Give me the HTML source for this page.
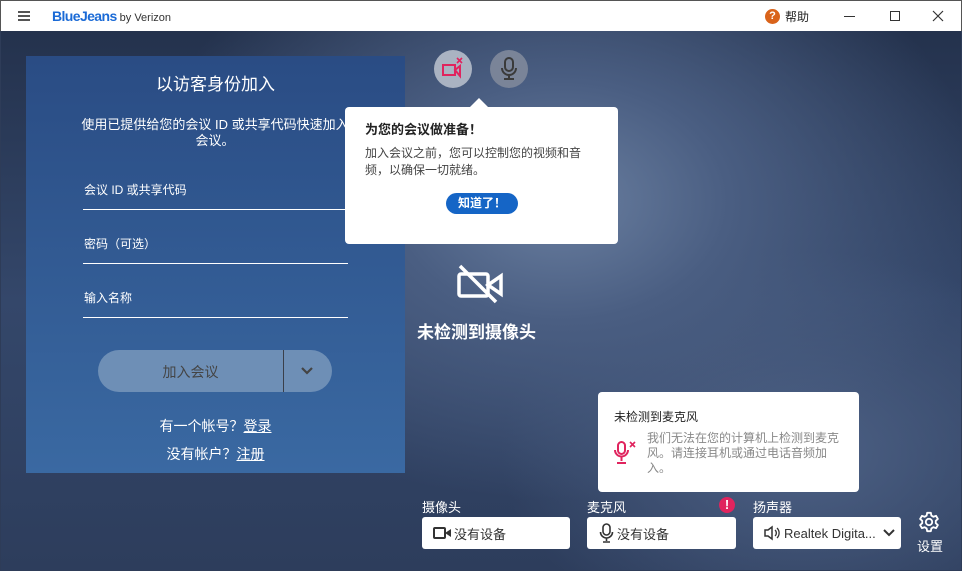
<!DOCTYPE html>
<html><head><meta charset="utf-8"><style>
*{margin:0;padding:0;box-sizing:border-box}
body{width:962px;height:571px;overflow:hidden;font-family:"Liberation Sans","Noto Sans CJK SC",sans-serif;position:relative;background:#2e3c58}
.bg{position:absolute;left:1px;top:31px;width:960px;height:539px;background:radial-gradient(ellipse 420px 300px at 560px 170px,#6a7fa0 0%,#4a5e82 40%,rgba(46,60,88,0) 100%),radial-gradient(ellipse 300px 200px at 800px 420px,#4d6185,rgba(46,60,88,0)),linear-gradient(180deg,#24324d 0%,#34476a 50%,#2d3d5c 100%)}
.tb{position:absolute;left:0;top:0;width:962px;height:31px;background:#fff;border:1px solid #555;border-bottom:none}
.abs{position:absolute}
.panel{position:absolute;left:26px;top:56px;width:379px;height:417px;background:linear-gradient(180deg,#2a4c84,#3a69a2)}
.w{color:#fff}
.field{position:absolute;left:83px;width:265px;border-bottom:1px solid #fff;color:#fff;font-size:13px;height:1px}
.card{position:absolute;background:#fff;border-radius:4px}
.dev{position:absolute;top:517px;height:32px;background:#fff;border-radius:3px;font-size:13px;color:#333;display:flex;align-items:center}
.lbl{position:absolute;top:497px;color:#fff;font-size:13px}
</style></head><body>
<div class="bg"></div>
<div class="tb">
 <div class="abs" style="left:17px;top:10px;width:12px;height:2px;background:#555;box-shadow:0 4px 0 #555,0 8px 0 #555"></div>
 <div class="abs" style="left:51px;top:7px;white-space:nowrap"><span style="font-size:14px;color:#1a6ad6;font-weight:bold;letter-spacing:-0.6px">BlueJeans</span><span style="font-size:11px;color:#333;margin-left:3px">by Verizon</span></div>
 <div class="abs" style="left:764px;top:8px;width:15px;height:15px;border-radius:50%;background:#d9631a;color:#fff;font-size:11px;font-weight:bold;text-align:center;line-height:15px">?</div>
 <div class="abs" style="left:784px;top:7px;font-size:12px;color:#222">帮助</div>
 <div class="abs" style="left:843px;top:15px;width:11px;height:1px;background:#333"></div>
 <div class="abs" style="left:889px;top:10px;width:10px;height:10px;border:1px solid #333"></div>
 <svg class="abs" style="left:931px;top:9px" width="12" height="12"><path d="M1 1l10 10M11 1L1 11" stroke="#333" stroke-width="1.2"/></svg>
</div>
<div class="panel"></div>
<div class="abs w" style="left:26px;width:379px;top:70px;text-align:center;font-size:17px">以访客身份加入</div>
<div class="abs w" style="left:78px;width:274px;top:117px;text-align:center;font-size:13px;line-height:16px">使用已提供给您的会议 ID 或共享代码快速加入会议。</div>
<div class="abs w" style="left:84px;top:181px;font-size:12px">会议 ID 或共享代码</div>
<div class="field" style="top:209px"></div>
<div class="abs w" style="left:84px;top:235px;font-size:12px">密码（可选）</div>
<div class="field" style="top:263px"></div>
<div class="abs w" style="left:84px;top:289px;font-size:12px">输入名称</div>
<div class="field" style="top:317px"></div>
<div class="abs" style="left:98px;top:350px;width:234px;height:42px;border-radius:21px;background:#6e8fb6"></div>
<div class="abs" style="left:283px;top:350px;width:1px;height:42px;background:#3a3f4a"></div>
<div class="abs" style="left:98px;top:362px;width:185px;text-align:center;font-size:14px;color:#444">加入会议</div>
<svg class="abs" style="left:300px;top:366px" width="14" height="10"><path d="M2 2l5 5 5-5" stroke="#444" stroke-width="2.2" fill="none"/></svg>
<div class="abs w" style="left:26px;width:379px;top:416px;text-align:center;font-size:14px">有一个帐号？<u>登录</u></div>
<div class="abs w" style="left:26px;width:379px;top:444px;text-align:center;font-size:14px">没有帐户？<u>注册</u></div>

<div class="abs" style="left:434px;top:50px;width:38px;height:38px;border-radius:50%;background:#aab3c2"></div>
<svg class="abs" style="left:440px;top:56px" width="26" height="26"><rect x="3" y="9" width="12" height="10" fill="none" stroke="#e0245e" stroke-width="2"/><path d="M15 14l5-4v10z" fill="none" stroke="#e0245e" stroke-width="2"/><path d="M17 2l5 5M22 2l-5 5" stroke="#e0245e" stroke-width="1.6"/></svg>
<div class="abs" style="left:490px;top:50px;width:38px;height:38px;border-radius:50%;background:#7a8498"></div>
<svg class="abs" style="left:498px;top:56px" width="22" height="26"><rect x="7" y="2" width="8" height="13" rx="4" fill="none" stroke="#3a3a3a" stroke-width="2"/><path d="M4 12a7 7 0 0 0 14 0M11 19v4M6 23h10" fill="none" stroke="#3a3a3a" stroke-width="2"/></svg>

<div class="abs" style="left:469px;top:98px;width:0;height:0;border-left:10px solid transparent;border-right:10px solid transparent;border-bottom:10px solid #fff"></div>
<div class="card" style="left:345px;top:107px;width:273px;height:137px"></div>
<div class="abs" style="left:365px;top:119px;font-size:13px;font-weight:bold;color:#222">为您的会议做准备！</div>
<div class="abs" style="left:365px;top:145px;width:226px;font-size:12px;line-height:17px;color:#444">加入会议之前，您可以控制您的视频和音频，以确保一切就绪。</div>
<div class="abs" style="left:446px;top:193px;width:72px;height:21px;border-radius:11px;background:#1565c6;color:#fff;font-size:12px;font-weight:bold;text-align:center;line-height:21px">知道了！</div>

<svg class="abs" style="left:456px;top:264px" width="50" height="40"><rect x="3" y="10" width="29" height="22" rx="2" fill="none" stroke="#fff" stroke-width="3.5"/><path d="M32 21l13-9v18z" fill="none" stroke="#fff" stroke-width="3.5"/><path d="M4 2l36 36" stroke="#fff" stroke-width="3.5"/></svg>
<div class="abs w" style="left:417px;top:318px;font-size:17px;font-weight:bold">未检测到摄像头</div>

<div class="card" style="left:598px;top:392px;width:261px;height:100px"></div>
<div class="abs" style="left:614px;top:408px;font-size:12px;color:#222">未检测到麦克风</div>
<svg class="abs" style="left:614px;top:440px" width="24" height="26"><rect x="4" y="2" width="7" height="12" rx="3.5" fill="none" stroke="#e0245e" stroke-width="2"/><path d="M1 10a6.5 6.5 0 0 0 13 0M7.5 17v4M3 23h9" fill="none" stroke="#e0245e" stroke-width="2"/><path d="M16 2l5 5M21 2l-5 5" stroke="#e0245e" stroke-width="1.6"/></svg>
<div class="abs" style="left:647px;top:431px;width:194px;font-size:12px;line-height:15px;color:#888">我们无法在您的计算机上检测到麦克风。请连接耳机或通过电话音频加入。</div>

<div class="lbl" style="left:422px">摄像头</div>
<div class="lbl" style="left:587px">麦克风</div>
<div class="abs" style="left:719px;top:497px;width:16px;height:16px;border-radius:50%;background:#e0245e;color:#fff;font-size:13px;font-weight:bold;text-align:center;line-height:16px">!</div>
<div class="lbl" style="left:753px">扬声器</div>
<div class="dev" style="left:422px;width:148px;padding-left:11px"><svg width="20" height="14"><rect x="1" y="2" width="11" height="10" rx="1" fill="none" stroke="#333" stroke-width="2"/><path d="M12 7l6-4v8z" fill="#333"/></svg><span style="margin-left:1px">没有设备</span></div>
<div class="dev" style="left:587px;width:149px;padding-left:12px"><svg width="16" height="20"><rect x="4" y="1" width="7" height="11" rx="3.5" fill="none" stroke="#333" stroke-width="1.6"/><path d="M1.5 9a6 6 0 0 0 12 0M7.5 15v3M4 19h7" fill="none" stroke="#333" stroke-width="1.6"/></svg><span style="margin-left:2px">没有设备</span></div>
<div class="dev" style="left:753px;width:148px;padding-left:10px"><svg width="18" height="16"><path d="M2 5h3l4-3v12l-4-3H2z" fill="none" stroke="#333" stroke-width="1.5"/><path d="M12 5a4 4 0 0 1 0 6M14 3a7 7 0 0 1 0 10" fill="none" stroke="#333" stroke-width="1.3"/></svg><span style="margin-left:3px">Realtek Digita...</span>
<svg class="abs" style="left:130px;top:12px" width="12" height="8"><path d="M1 1l5 5 5-5" stroke="#333" stroke-width="2" fill="none"/></svg></div>
<svg class="abs" style="left:918px;top:511px" width="22" height="22" viewBox="0 0 24 24"><path d="M12 8.5a3.5 3.5 0 1 0 0 7 3.5 3.5 0 0 0 0-7z" fill="none" stroke="#fff" stroke-width="2"/><path d="M10 2h4l.6 3 2.2 1.3 2.9-1 2 3.4-2.3 2v2.6l2.3 2-2 3.4-2.9-1-2.2 1.3-.6 3h-4l-.6-3-2.2-1.3-2.9 1-2-3.4 2.3-2v-2.6l-2.3-2 2-3.4 2.9 1L9.4 5z" fill="none" stroke="#fff" stroke-width="2" stroke-linejoin="round"/></svg>
<div class="abs w" style="left:917px;top:536px;font-size:13px">设置</div>
</body></html>
